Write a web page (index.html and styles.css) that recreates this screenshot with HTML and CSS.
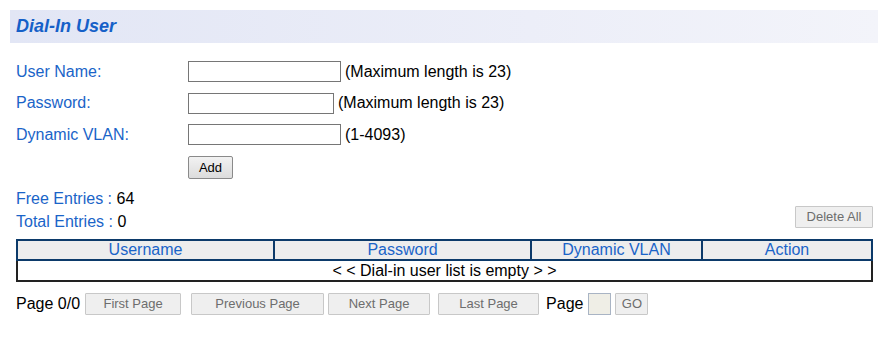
FILE: index.html
```html
<!DOCTYPE html>
<html lang="en">
<head>
    <meta charset="UTF-8">
    <title>Dial-In User</title>
    <link rel="stylesheet" href="styles.css">
</head>
<body>
    <div class="title-bar">
        <h1>Dial-In User</h1>
    </div>

    <div class="content">
        <div class="form">
            <div class="form-row">
                <label class="label">User Name:</label>
                <input type="text" class="field">
                <span class="hint">(Maximum length is 23)</span>
            </div>
            <div class="form-row">
                <label class="label">Password:</label>
                <input type="password" class="field field-short">
                <span class="hint">(Maximum length is 23)</span>
            </div>
            <div class="form-row">
                <label class="label">Dynamic VLAN:</label>
                <input type="text" class="field">
                <span class="hint">(1-4093)</span>
            </div>
            <div class="form-row">
                <span class="label"></span>
                <button class="add-btn">Add</button>
            </div>
        </div>

        <div class="summary">
            <div class="stats">
                <div><span class="key">Free Entries : </span>64</div>
                <div><span class="key">Total Entries : </span>0</div>
            </div>
            <button class="btn-disabled delete-btn">Delete All</button>
        </div>

        <table class="user-table">
            <colgroup>
                <col class="col-user">
                <col class="col-pass">
                <col class="col-vlan">
                <col>
            </colgroup>
            <thead>
                <tr>
                    <th>Username</th>
                    <th>Password</th>
                    <th>Dynamic VLAN</th>
                    <th>Action</th>
                </tr>
            </thead>
            <tbody>
                <tr>
                    <td colspan="4">&lt; &lt; Dial-in user list is empty &gt; &gt;</td>
                </tr>
            </tbody>
        </table>

        <div class="pager">
            <span class="pager-text">Page 0/0</span>
            <button class="btn-disabled pg-first">First Page</button>
            <button class="btn-disabled pg-prev">Previous Page</button>
            <button class="btn-disabled pg-next">Next Page</button>
            <button class="btn-disabled pg-last">Last Page</button>
            <span class="pager-text pager-label">Page</span>
            <input type="text" class="page-field" disabled>
            <button class="btn-disabled pg-go">GO</button>
        </div>
    </div>
</body>
</html>
```

FILE: styles.css
```css
body {
    font-family: "Liberation Sans", Arial, sans-serif;
    font-size: 16px;
    margin: 10px 6px 0 10px;
    color: #000;
    background: #fff;
}
.title-bar {
    height: 33px;
    background: linear-gradient(to right, #e2e6f5, #eceef8 60%, #f3f4fa);
    display: flex;
    align-items: center;
    padding-left: 6px;
}
.title-bar h1 {
    margin: 0;
    font-size: 18px;
    font-weight: bold;
    font-style: italic;
    color: #1560c8;
}
.content {
    padding: 0 5px 0 6px;
}
.form {
    margin-top: 18px;
    display: flex;
    flex-direction: column;
    gap: 10.5px;
}
.form-row {
    display: flex;
    align-items: center;
    height: 21px;
}
.form-row:last-child {
    height: 23px;
}
.label {
    width: 172px;
    color: #1a64c8;
}
.field {
    box-sizing: border-box;
    width: 153px;
    height: 21px;
    border: 1px solid #767676;
    margin: 0 4px 0 0;
    padding: 1px 2px;
    font: inherit;
}
.field-short {
    width: 146px;
}
.add-btn {
    box-sizing: border-box;
    width: 45px;
    height: 23px;
    font-family: inherit;
    font-size: 13px;
    color: #000;
    border: 1px solid #8a8a8a;
    border-radius: 2px;
    background: linear-gradient(#f2f2f2, #dcdcdc);
    padding: 0;
}
.summary {
    margin-top: 8px;
    display: flex;
    justify-content: space-between;
    align-items: flex-end;
}
.stats div {
    line-height: 23px;
}
.key {
    color: #1a64c8;
}
.btn-disabled {
    box-sizing: border-box;
    height: 22px;
    font-family: inherit;
    font-size: 13px;
    color: #6d6d6d;
    background: #efefef;
    border: 1px solid #c8c8c8;
    border-radius: 1px;
    padding: 0;
}
.delete-btn {
    width: 78px;
    margin-bottom: 5px;
}
.user-table {
    width: 857px;
    margin-top: 6px;
    border-collapse: collapse;
    table-layout: fixed;
}
.col-user,
.col-pass {
    width: 257px;
}
.col-vlan {
    width: 171px;
}
.user-table th {
    background: #ededed;
    color: #1a64c8;
    font-weight: normal;
    border: 2px solid #0c3a6a;
    height: 18px;
    padding: 0;
    line-height: 18px;
}
.user-table td {
    border: 2px solid #222;
    border-top: none;
    text-align: center;
    height: 19px;
    padding: 0;
    line-height: 19px;
}
.pager {
    margin-top: 11px;
    display: flex;
    align-items: center;
    height: 22px;
}
.pager-text {
    margin-right: 5px;
}
.pg-first {
    width: 96px;
    margin-right: 10px;
}
.pg-prev {
    width: 133px;
    margin-right: 4px;
}
.pg-next {
    width: 102px;
    margin-right: 8px;
}
.pg-last {
    width: 101px;
    margin-right: 7px;
}
.pager-label {
    margin-right: 5px;
}
.page-field {
    box-sizing: border-box;
    width: 23px;
    height: 22px;
    background: #efeee6;
    border: 1px solid #a9b4c4;
    margin: 0 4px 0 0;
    padding: 0;
}
.pg-go {
    width: 33px;
}
```
